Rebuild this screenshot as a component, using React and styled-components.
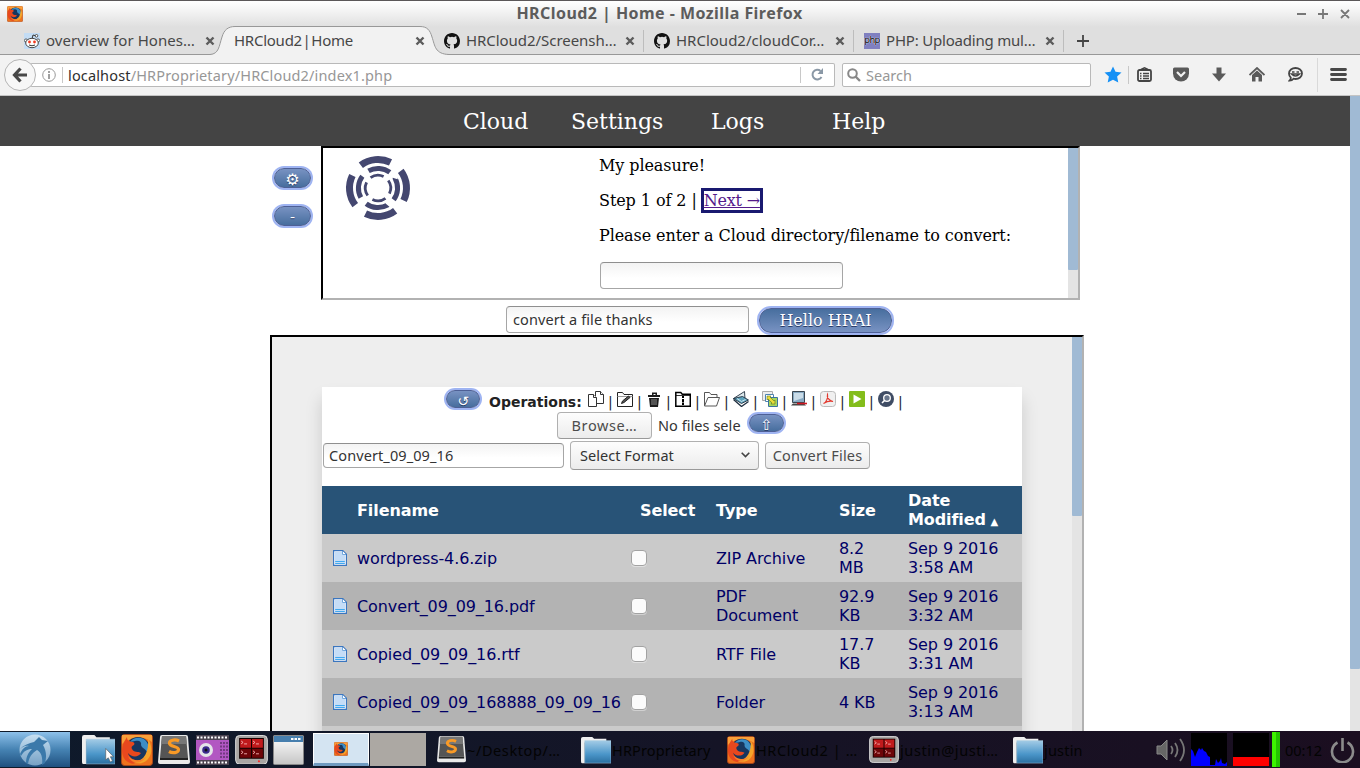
import React from 'react';
import styled, { createGlobalStyle, css } from 'styled-components';

const UI = '"Noto Sans", "Open Sans", sans-serif';
const SANS = '"DejaVu Sans", sans-serif';
const SERIF = '"DejaVu Serif", serif';

const Global = createGlobalStyle`
  * { box-sizing: border-box; }
  body { margin: 0; overflow: hidden; background: #fff; }
  svg { display: block; flex: none; }
`;

const Screen = styled.div`
  width: 1360px; height: 768px; display: flex; flex-direction: column;
  overflow: hidden; font-family: ${UI};
`;
const Label = styled.span`
  white-space: nowrap; letter-spacing: ${p => p.$ls || 0}px; word-spacing: ${p => p.$ws || 0}px;
`;

/* ---------- window chrome ---------- */
const TitleBar = styled.header`
  height: 27px; flex: none; display: flex; align-items: center; padding: 0 8px 0 7px;
  border-top: 1px solid #5b5759;
  background: linear-gradient(#fff, #f3f3f3 40%, #dfdfdf);
`;
const WindowTitle = styled.h1`
  flex: 1; margin: 0; text-align: center; color: #5c5c5c;
  font: 700 16px/22px ${UI}; letter-spacing: .45px; padding-bottom: 3px;
`;
const WindowControls = styled.div`display: flex; gap: 10px; align-items: center; width: 56px;`;

const TabStrip = styled.nav`
  height: 28px; flex: none; display: flex; background: #dfdfdf;
  border-bottom: 1px solid #989898; padding-left: 14px;
`;
const TabBox = styled.div`
  width: 210px; height: 28px; display: flex; align-items: center; position: relative;
  padding: 0 9px 0 10px; color: #474747; font-size: 15px;
  svg { position: relative; }
  &::after {
    content: ''; position: absolute; right: 0; top: 3px; width: 1px; height: 22px;
    background: ${p => (p.$line ? '#bdbdbd' : 'transparent')};
  }
`;
const TabShape = styled.span`position: absolute; left: -14px; top: -1px; z-index: 0;`;
const TabText = styled(Label)`
  position: relative; flex: 1; margin-left: ${p => (p.$bare ? 0 : 6)}px; line-height: 26px; top: -1px;
`;
const NewTab = styled.div`width: 38px; display: flex; align-items: center; justify-content: center;`;

const Toolbar = styled.div`
  height: 41px; flex: none; display: flex; align-items: center; background: #f2f2f2;
  border-bottom: 1px solid #c4c4c4; padding: 0 12px 1px 4px;
`;
const BackButton = styled.div`
  width: 32px; height: 32px; border: 1px solid #b5b5b5; border-radius: 50%; background: #f7f7f7;
  display: flex; align-items: center; justify-content: center; position: relative; z-index: 1;
`;
const Field = styled.div`
  height: 24px; border: 1px solid #b9b9b9; border-radius: 2px; background: #fff;
  display: flex; align-items: center; font-size: 14.5px; color: #979797; width: ${p => p.$w}px;
`;
const UrlField = styled(Field)`margin-left: -6px; padding-left: 12px; border-left: 0;`;
const SearchField = styled(Field)`margin-left: 7px; padding-left: 4px; gap: 5px;`;
const Rule = styled.i`width: 1px; height: ${p => p.$h || 16}px; background: ${p => p.$c || '#c8c8c8'}; margin: 0 ${p => p.$r || 0}px 0 ${p => p.$l || 0}px;`;
const Host = styled.b`font-weight: 400; color: #2e2e2e;`;
const Reload = styled.div`margin-left: auto; display: flex; align-items: center; gap: 10px; padding-right: 10px;`;
const ToolIcons = styled.div`display: flex; align-items: center; margin-left: 13px; flex: 1; justify-content: flex-start;`;
const ToolIcon = styled.div`width: 18px; display: flex; justify-content: center; margin-right: ${p => p.$r ?? 20}px;`;

/* ---------- page ---------- */
const Viewport = styled.div`height: 635px; flex: none; display: flex; overflow: hidden;`;
const Page = styled.main`width: 1350px; height: 635px; overflow: hidden; background: #fff;`;
const Track = styled.div`
  width: 10px; flex: none; background: #e4e4e4;
  &::before { content: ''; display: block; height: ${p => p.$thumb}px; background: #a0bad4; border-radius: 0 0 1px 1px; }
`;
const SiteNav = styled.nav`
  height: 50px; background: #444; display: flex; padding-left: 463px;
  font: 22px/52px ${SERIF}; color: #fff;
`;
const NavItem = styled.a`width: ${p => p.$w}px;`;

const AssistantRow = styled.section`display: flex; height: 154px; padding-left: 274px;`;
const SideButtons = styled.div`width: 47px; display: flex; flex-direction: column; gap: 18px; padding-top: 22px;`;
const Frame = styled.div`
  border: 2px solid; border-color: #000 #b2b2b2 #b2b2b2 #000; display: flex;
  width: ${p => p.$w}px; height: ${p => p.$h}px; background: ${p => p.$bg || '#fff'};
`;
const pill = css`
  border: 1px solid #4e6096; box-shadow: 0 0 0 2px #9fb4f2;
  color: #fff; text-shadow: 0 1px 0 #283966;
  display: inline-flex; align-items: center; justify-content: center;
`;
const Pill = styled.button`
  ${pill}
  width: ${p => p.$w || 37}px; height: ${p => p.$h || 20}px; padding: ${p => p.$drop || 0}px 0 0; flex: none;
  border-radius: ${p => p.$r || 10}px;
  background: ${p => (p.$hover ? 'linear-gradient(#476e9e, #7892c2)' : 'linear-gradient(#7892c2, #476e9e)')};
  font: ${p => p.$size || 14}px/16px ${p => p.$font || SANS};
`;
const LogoCell = styled.div`width: 276px; padding: 7px 0 0 22px;`;
const Chat = styled.div`
  flex: 1; color: #000; font: 16px/19px ${SERIF}; padding-top: 8px; letter-spacing: -.08px;
  p { margin: 0 0 16px; height: 19px; white-space: nowrap; }
`;
const ChatInput = styled.div`padding: 1px 0 0 1px;`;
const NextLink = styled.a`
  color: #551a8b; text-decoration: underline; border: 3px solid #191970; display: inline-block;
  height: 25px; width: 62px; margin: -3px 0 -3px -1px; line-height: 19px; vertical-align: top; letter-spacing: -.2px;
`;
const Input = styled.div`
  width: ${p => p.$w}px; height: ${p => p.$h}px; border: 1px solid #a6a6a6; border-top-color: #8f8f8f; border-radius: 4px;
  background: linear-gradient(#f3f3f3, #fff 60%); font: 14.5px/${p => p.$h - 3}px ${UI}; letter-spacing: .1px; color: #333; padding-left: ${p => p.$p || 6}px;
  flex: none;
`;
const AskRow = styled.div`display: flex; height: 35px; padding: 6px 0 0 506px; gap: 10px;`;
const PillNudge = styled.div`padding-top: 2px; line-height: 0;`;

const FilesWrap = styled.section`padding-left: 270px;`;
const FilesBody = styled.div`flex: 1; padding: 50px 0 0 50px;`;
const Card = styled.div`width: 700px; height: 420px; background: #fff; box-shadow: 0 12px 16px rgba(0,0,0,.15);`;
const OpsRow = styled.div`
  display: flex; height: 25px; padding-left: 124px; color: #222; font: 14px/30px ${SANS};
`;
const OpsTitle = styled.strong`width: 97px; margin-left: 9px;`;
const Op = styled.span`
  width: 29px; display: flex; padding: 4px 0 0 2px;
  i { font-style: normal; color: #223; line-height: 23px; margin-left: 4px; width: 5px; }
`;
const PillTop = styled.div`padding-top: ${p => p.$t}px; line-height: 0;`;
const UploadRow = styled.div`display: flex; height: 29px; padding-left: 235px;`;
const GtkButton = styled.div`
  width: ${p => p.$w}px; height: ${p => p.$h}px; margin-top: ${p => p.$t || 0}px; border: 1px solid #b0b0b0; border-bottom-color: #999; border-radius: 4px;
  background: linear-gradient(#fdfdfd, #ececec); color: ${p => p.$c || '#4c4c4c'};
  font: 14.5px/20px ${UI}; display: flex; justify-content: ${p => p.$j || 'center'}; padding: ${p => p.$pad || '0 0 2px'};
  align-items: center; flex: none;
`;
const Status = styled.div`width: 83px; margin: 0 8px 0 6px; overflow: hidden; font: 14.5px/26px ${UI}; color: #333;`;
const ConvertRow = styled.div`display: flex; height: 45px; padding-left: 1px; gap: 6px;`;

const Grid = styled.div`
  display: grid; grid-template-columns: 35px 274px 85px 123px 69px 114px; height: 48px; align-items: center;
  font: 16px/19px ${SANS}; letter-spacing: -.09px; color: #000066; background: ${p => (p.$odd ? '#b3b3b3' : '#cacaca')};
`;
const HeadGrid = styled(Grid)`background: #285377; color: #fff; font-weight: 700;`;
const Cell = styled.div`white-space: pre; padding-left: ${p => p.$p || 0}px;`;
const Check = styled.div`
  width: 16px; height: 16px; border: 1px solid #a2a2a2; border-radius: 4px; background: #fbfbfb;
  box-shadow: 0 1px 0 rgba(255,255,255,.4);
`;
const Sort = styled.span`font-size: 10px; line-height: 0; margin-left: -1px;`;

/* ---------- taskbar ---------- */
const Panel = styled.footer`
  height: 37px; flex: none; display: flex; align-items: center; color: #030303; font-size: 14.5px;
  background: linear-gradient(90deg, #0e1a2b, #141527 45%, #1b0e20);
`;
const Start = styled.div`
  width: 70px; height: 35px; background: linear-gradient(#8dc0ea, #4683b3 50%, #1f507f); display: flex; justify-content: center; align-items: center;
`;
const Launchers = styled.div`display: flex; gap: 5.7px; padding-left: 12px; width: 243px; align-items: center;`;
const Desk = styled.div`
  width: 56px; height: 33px; margin-right: 1px; display: flex; align-items: center; justify-content: center;
  background: ${p => (p.$on ? '#d4e4f2' : '#aca8a3')}; border: ${p => (p.$on ? '1px solid #fff' : '0')};
  border-bottom: ${p => (p.$on ? '3px solid #6f9ac0' : '0')};
`;
const Tasks = styled.div`display: flex; padding-left: 10px;`;
const Task = styled.div`width: ${p => p.$w}px; display: flex; align-items: center; gap: 1px;`;
const Meter = styled.div`width: 36px; height: 33px; background: #000; margin-right: ${p => p.$r}px; display: flex; align-items: flex-end;`;
const RedFill = styled.div`width: 36px; height: 9px; background: #f00;`;
const Battery = styled.div`width: 8px; height: 35px; background: linear-gradient(90deg, #3df400 50%, #24c400 50%); margin-right: 5px;`;
const Clock = styled(Label)`width: 45px;`;

/* ---------- icons ---------- */
const FirefoxIcon = ({ s = 16 }) => (
  <svg width={s} height={s} viewBox="0 0 32 32">
    <rect x=".5" y=".5" width="31" height="31" rx="3" fill="#ed721d" stroke="#a9461a" />
    <path d="M1 1h30v7C24 2 10 2 1 10z" fill="#f9a03a" />
    <circle cx="17" cy="15.5" r="12.5" fill="#17365f" />
    <path d="M9 8c3-5 12-6 16-1 3 4 4 8 2 13-2-6-6-5-7-9 1-4-3-5-6-4z" fill="#3c8dc5" />
    <path d="M6 3c0 4 2 4 5 5 2 0 3 1 2 3-2 1-3 2-2 4 2 4 6 2 9 4-3 5-10 4-13 0 2 8 13 10 20 3-3 8-14 10-20 6C0 24 0 14 3 8z" fill="#e8481e" />
    <path d="M27 5c4 6 5 14 0 20-4 5-10 5-15 4 12-2 16-12 15-24z" fill="#f5a42a" />
    <path d="M7 22c4 5 12 6 18 1-4 7-14 8-18-1z" fill="#f7832a" />
  </svg>
);
const RedditIcon = () => (
  <svg width="16" height="16" viewBox="0 0 16 16">
    <rect width="16" height="16" fill="#c3dcf4" />
    <path d="M8 6l1-4 3 .8" stroke="#333" fill="none" /><circle cx="12.5" cy="2.8" r="1.3" fill="#fff" stroke="#333" strokeWidth=".8" />
    <circle cx="2" cy="7.5" r="1.6" fill="#fff" stroke="#444" strokeWidth=".8" /><circle cx="14" cy="7.5" r="1.6" fill="#fff" stroke="#444" strokeWidth=".8" />
    <ellipse cx="8" cy="10" rx="6.3" ry="4.7" fill="#fff" stroke="#333" strokeWidth=".9" />
    <circle cx="5.5" cy="9" r="1.4" fill="#f13b22" /><circle cx="10.5" cy="9" r="1.4" fill="#f13b22" />
    <path d="M5 12q3 1.6 6 0" stroke="#333" fill="none" />
  </svg>
);
const GithubIcon = () => (
  <svg width="16" height="16" viewBox="0 0 16 16"><path fill="#111" d="M8 0C3.58 0 0 3.58 0 8c0 3.54 2.29 6.53 5.47 7.59.4.07.55-.17.55-.38v-1.49c-2.01.37-2.53-.49-2.69-.94-.09-.23-.48-.94-.82-1.13-.28-.15-.68-.52-.01-.53.63-.01 1.08.58 1.23.82.72 1.21 1.87.87 2.33.66.07-.52.28-.87.51-1.07-1.78-.2-3.64-.89-3.64-3.95 0-.87.31-1.59.82-2.15-.08-.2-.36-1.02.08-2.12 0 0 .67-.21 2.2.82a7.5 7.5 0 014 0c1.53-1.04 2.2-.82 2.2-.82.44 1.1.16 1.92.08 2.12.51.56.82 1.27.82 2.15 0 3.07-1.87 3.75-3.65 3.95.29.25.54.73.54 1.48v2.2c0 .21.15.46.55.38A8.01 8.01 0 0016 8c0-4.42-3.58-8-8-8z" /></svg>
);
const PhpBadge = styled.span`
  width: 16px; height: 16px; background: #8080c0; color: #000; font: 9px/14px ${SANS}; text-align: center; letter-spacing: -.6px;
  text-shadow: 0 0 1px #fff, 0 0 1px #fff; position: relative; overflow: hidden;
`;
const CloseIcon = () => (
  <svg width="10" height="10" viewBox="0 0 10 10"><path d="M1.500 1.500l7 7m0-7l-7 7" stroke="#5c5c5c" strokeWidth="2.400" /></svg>
);
const ActiveTabShape = () => (
  <svg width="239" height="30" viewBox="0 0 239 30">
    <path d="M0 28.5C9 28 9 20 12 11 14 4 18 .5 25 .5H210C217 .5 220 4 222 11 225 20 225 28 239 28.500V30H0z" fill="#f2f2f2" />
    <path d="M0 28.5C9 28 9 20 12 11 14 4 18 .5 25 .5H210C217 .5 220 4 222 11 225 20 225 28 239 28.500" fill="none" stroke="#989898" />
  </svg>
);
const Logo = () => (
  <svg width="66" height="66" viewBox="-33 -33 66 66" fill="none" stroke="#444770">
    <circle r="28.5" strokeWidth="7" pathLength="360" strokeDasharray="63 27" transform="rotate(-127)" />
    <circle r="19.6" strokeWidth="5" pathLength="360" strokeDasharray="66 24" transform="rotate(-119)" />
    <circle r="12.7" strokeWidth="2.8" pathLength="360" strokeDasharray="62 28" transform="rotate(-126)" />
  </svg>
);
const FileIcon = () => (
  <svg width="14" height="16" viewBox="0 0 14 16">
    <path d="M.6.6h9.2l3.600 3.600v11.200H.6z" fill="#fff" stroke="#3b76bf" strokeWidth="1.2" />
    <path d="M2 2h7v3h3v9H2z" fill="#c5ddf7" /><path d="M9.500 1v3.500H13" fill="#fff" stroke="#4e92d5" strokeWidth=".8" />
    <path d="M2.200 11.500h9.600M2.200 13.500h9.600" stroke="#3fa9f0" />
  </svg>
);
const opIcons = [
  <g fill="#fff" stroke="#333" strokeWidth="1"><path d="M7.500.5h5l3 3v9h-8z" /><path d="M12.500.5v3h3" /><path d="M.5 3.500h5l3 3v9h-8z" /><path d="M5.500 3.500v3h3" /></g>,
  <g fill="none" stroke="#222"><path d="M.5 15.500v-14h5l1.500 2h8.500v12z" /><path d="M.5 5.500h15" stroke="#999" /><path d="M4.500 12.500l1-2.500 6-5 1.500 1.500-6 5z" fill="#555" /></g>,
  <g fill="#1c1c1c"><path d="M2 4h12v2H2zM6 1.500h5V4H9.500V3h-2v1H6zM3 7h10l-1 9H4z" /><path d="M6 8v6M8 8v6M10 8v6" stroke="#aaa" strokeWidth=".8" /></g>,
  <g><path d="M.8 15.200V1.500h5l1.500 1.700h8v12z" fill="#fff" stroke="#000" strokeWidth="1.500" /><path d="M8 5v2M8 8v3M8 11.500v2.500" stroke="#000" strokeWidth="2" /><path d="M1 4.500h14" stroke="#000" strokeWidth=".8" /></g>,
  <g fill="#fff" stroke="#444" strokeWidth=".9"><path d="M.5 14.500v-13h5l1.500 2h6v3" /><path d="M.5 15l3.500-8.500h11.500L12.500 15z" /></g>,
  <g stroke="#203040" strokeWidth=".9"><path d="M.5 7.500L11.500.5 12 8z" fill="#dce8ec" /><path d="M.5 7.500l8 5 7-3.500-6-3.500z" fill="#5ea3bd" /><path d="M.5 8.500l8 7 7-5" fill="none" strokeWidth="1.300" /><path d="M4 7.500l4.500 3 4-2" stroke="#d8eef4" fill="none" /></g>,
  <g><path d="M.5.5h10v9H.5z" fill="#eee" stroke="#aaa" /><path d="M3.500 3.500h8v7h-8z" fill="#fff" stroke="#4d84b0" /><path d="M6.500 6.500h9v9h-9z" fill="#a9d55c" stroke="#3b74a0" /><path d="M5 5h4l-1 1 4 4 1-1v4H9l1-1-4-4-1 1z" fill="#eadb38" stroke="#5b7b21" strokeWidth=".6" /></g>,
  <g><path d="M1.500.5h12v11h-12z" fill="#87a9c2" stroke="#3b4650" /><path d="M3 2h9v5L3 10z" fill="#cadce8" /><path d="M0 14.500l2-2h11l2 2z" fill="#444" /><path d="M6 12.500h10" stroke="#d01822" strokeWidth="1.600" /></g>,
  <g><rect x=".5" y=".5" width="15" height="15" rx="3" fill="#f0f0f0" stroke="#bbb" /><path d="M3.500 12.500C7 11 8 6 7.500 3.500c-1 3 2 6.500 5.500 7-3-1-7 .5-9.500 2z" fill="none" stroke="#e33a30" strokeWidth="1.200" /></g>,
  <g><rect width="16" height="16" rx="1" fill="#83bd1b" /><path d="M4.500 3.500l8 4.500-8 4.500z" fill="#fff" /></g>,
  <g><circle cx="8" cy="8" r="8" fill="#3f4c64" /><circle cx="9" cy="7" r="3.300" fill="#68758b" stroke="#fff" strokeWidth="1.300" /><path d="M6.500 9.500L4 12" stroke="#fff" strokeWidth="1.600" /></g>,
];
const FolderIcon = ({ s = 30, pointer }) => (
  <svg width={s} height={s} viewBox="0 0 32 32">
    <defs><linearGradient id="fold" x2="0" y2="1"><stop stopColor="#a3cbe6" /><stop offset=".6" stopColor="#4b96c9" /><stop offset="1" stopColor="#2b6fa0" /></linearGradient></defs>
    <path d="M0 4q0-2 2-2h10l2 2h13v4H4v22H1q-1 0-1-2z" fill="#eee" />
    <path d="M4 6h28v24H4z" fill="url(#fold)" stroke="#a7cbe2" strokeWidth=".5" />
    {pointer && <path d="M23 15v11l2.500-2 2 4 2-1-2-4h3z" fill="#fff" stroke="#555" strokeWidth=".6" />}
  </svg>
);
const SublimeIcon = ({ s = 32 }) => (
  <svg width={s} height={s} viewBox="0 0 32 32">
    <path d="M4 1h24q2 0 2 2l2 25q0 2-2 2H2q-2 0-2-2L2 3q0-2 2-2z" fill="#e9e9e9" />
    <path d="M4 2h24l2 22H2z" fill="#555" /><path d="M4 2h24l1 8H3z" fill="#777" /><path d="M2 24h28v2H2z" fill="#222" />
    <path d="M21 7C17 5 11 6 11.500 9.500s9 2.500 9 6-6 4-9.500 2" fill="none" stroke="#f99a26" strokeWidth="3.200" />
  </svg>
);
const RecorderIcon = () => (
  <svg width="33" height="30" viewBox="0 0 33 30">
    <rect width="33" height="30" rx="1" fill="#b257c2" /><path d="M0 0h33v5H0zM0 25h33v5H0z" fill="#4b4350" />
    <path d="M1 2.500h31M1 27.500h31" stroke="#fff" strokeWidth="2" strokeDasharray="2 1.500" />
    <path d="M25 7v16M28 7v16M31 7v16" stroke="#61306e" strokeWidth="1.500" strokeDasharray="2 1.500" />
    <circle cx="10" cy="15" r="7" fill="#e4e4e8" /><circle cx="10" cy="15" r="3.800" fill="#3a2a8c" /><circle cx="10" cy="15" r="1.500" fill="#111" />
  </svg>
);
const TermIcon = ({ s = 33 }) => (
  <svg width={s} height={s * 0.9} viewBox="0 0 33 30">
    <rect x=".5" y=".5" width="32" height="29" rx="4" fill="#a9a6a4" stroke="#ddd" /><rect x="4" y="3" width="25" height="21" fill="#150000" />
    <path d="M5 4h11v9H5zM17 4h11v9H17z" fill="#c01a1c" /><path d="M5 14h11v9H5zM17 14h11v9H17z" fill="#6d0508" />
    <path d="M6 6l2 1.500L6 9M9 9h3M18 6l2 1.500-2 1.500M21 9h3M6 16l2 1.500L6 19M9 19h3M18 16l2 1.500-2 1.500M21 19h3" fill="none" stroke="#f8b9b9" strokeWidth=".9" />
    <circle cx="24" cy="26.500" r="1" fill="#f22" />
  </svg>
);
const WindowIcon = () => (
  <svg width="31" height="30" viewBox="0 0 31 30">
    <defs><linearGradient id="win" x2="0" y2="1"><stop stopColor="#fff" /><stop offset="1" stopColor="#c5c5c5" /></linearGradient></defs>
    <rect x=".5" y=".5" width="30" height="29" rx="1" fill="url(#win)" stroke="#888" /><path d="M1 1h29v6H1z" fill="#477fae" />
    <path d="M18 4h10" stroke="#fff" strokeWidth="2" strokeDasharray="2.500 1" />
  </svg>
);
const BirdIcon = () => (
  <svg width="32" height="32" viewBox="0 0 32 32">
    <defs><linearGradient id="orb" x2="0" y2="1"><stop stopColor="#d3e6f4" /><stop offset="1" stopColor="#86afd0" /></linearGradient></defs>
    <circle cx="16" cy="16" r="15.500" fill="url(#orb)" opacity=".85" />
    <path d="M1 15C5 11 10 9 15 8l5-5 3 3 6 1-5 4c3 5 4 11 2 18l-3 2c1-8-1-13-5-15-5 3-8 7-9 14l-2-1c0-6 2-10 6-14-5 0-8 2-11 7l-1-2c2-5 5-8 9-8-4-1-6 1-9 3z" fill="#3b79aa" />
  </svg>
);
const VolumeIcon = () => (
  <svg width="30" height="28" viewBox="0 0 30 28" fill="none" stroke="#777" strokeWidth="1.800">
    <path d="M1 10h4l6-6v20l-6-6H1z" fill="#666" stroke="#888" strokeWidth="1" /><path d="M15 10q3 4 0 8M19 7q5 7 0 14M24 3q8 11 0 22" />
  </svg>
);
const PowerIcon = () => (
  <svg width="25" height="26" viewBox="0 0 25 26" fill="none" stroke="#8b8b8b" strokeWidth="2.600">
    <path d="M7.500 5.500a10.500 10.500 0 1 0 10 0M12.500 1v13" />
  </svg>
);
const cpu = '0,33 0,16 2,18 4,24 6,19 8,15 10,17 11,15 13,18 15,19 17,23 19,24 19,32 24,32 25,26 27,30 29,28 30,25 31,30 34,31 36,29 36,33';

const tabs = [
  { icon: <RedditIcon />, text: 'overview for Hones…', ls: 0.07 },
  { text: 'HRCloud2 | Home', active: true, ls: -0.25, ws: -3 },
  { icon: <GithubIcon />, text: 'HRCloud2/Screensh…', line: true, ls: -0.05 },
  { icon: <GithubIcon />, text: 'HRCloud2/cloudCor…', line: true, ls: 0 },
  { icon: <PhpBadge>php</PhpBadge>, text: 'PHP: Uploading mul…', line: true, ls: -0.2 },
];
const files = [
  ['wordpress-4.6.zip', 'ZIP Archive', '8.2\nMB', 'Sep 9 2016\n3:58 AM'],
  ['Convert_09_09_16.pdf', 'PDF\nDocument', '92.9\nKB', 'Sep 9 2016\n3:32 AM'],
  ['Copied_09_09_16.rtf', 'RTF File', '17.7\nKB', 'Sep 9 2016\n3:31 AM'],
  ['Copied_09_09_168888_09_09_16', 'Folder', '4 KB', 'Sep 9 2016\n3:13 AM'],
  ['', '', '', ''],
];

function Chrome() {
  return (
    <>
      <TitleBar>
        <FirefoxIcon />
        <WindowTitle>HRCloud2 | Home - Mozilla Firefox</WindowTitle>
        <WindowControls>
          <svg width="56" height="12" viewBox="0 0 56 12" stroke="#777" strokeWidth="1.800"><path d="M1 6h9M22 6h10M27 1v10M45 2l8 8m0-8l-8 8" /></svg>
        </WindowControls>
      </TitleBar>
      <TabStrip>
        {tabs.map(t => (
          <TabBox key={t.text} $line={t.line}>
            {t.active && <TabShape><ActiveTabShape /></TabShape>}
            {t.icon}
            <TabText $bare={!t.icon} $ls={t.ls} $ws={t.ws}>{t.text}</TabText>
            <CloseIcon />
          </TabBox>
        ))}
        <NewTab><svg width="12" height="12" viewBox="0 0 12 12"><path d="M6 0v12M0 6h12" stroke="#444" strokeWidth="1.800" /></svg></NewTab>
      </TabStrip>
      <Toolbar>
        <BackButton><svg width="16" height="16" viewBox="0 0 16 16"><path d="M8.500 1.500L2.500 8l6 6.500M3 8h12" fill="none" stroke="#484848" strokeWidth="3.200" /></svg></BackButton>
        <UrlField $w={805}>
          <svg width="14" height="14" viewBox="0 0 14 14"><circle cx="7" cy="7" r="6.300" fill="none" stroke="#999" /><path d="M7 3v2M7 6v5" stroke="#888" strokeWidth="1.600" /></svg>
          <Rule $l={6} $r={5} />
          <Label $ls={0.15}><Host>localhost</Host>/HRProprietary/HRCloud2/index1.php</Label>
          <Reload><Rule /><svg width="13" height="13" viewBox="0 0 13 13"><path d="M10.500 9A4.800 4.800 0 1 1 9.500 3" fill="none" stroke="#8a98a6" strokeWidth="2" /><path d="M12 0v6H6.500z" fill="#8a98a6" /></svg></Reload>
        </UrlField>
        <SearchField $w={249}>
          <svg width="14" height="14" viewBox="0 0 14 14"><circle cx="5.500" cy="5.500" r="4.300" fill="none" stroke="#888" strokeWidth="2" /><path d="M8.500 8.500L13 13" stroke="#888" strokeWidth="2.400" /></svg>
          <Label>Search</Label>
        </SearchField>
        <ToolIcons>
          <ToolIcon $r={6}><svg width="18" height="17" viewBox="0 0 18 17"><path d="M9 .5l2.500 5.300 6 .8-4.400 4 1.200 6L9 13.700l-5.300 2.900 1.200-6L.5 6.600l6-.8z" fill="#1590f5" /></svg></ToolIcon>
          <Rule $r={6} $h={18} />
          <ToolIcon $r={19}><svg width="15" height="15" viewBox="0 0 15 15" fill="none" stroke="#444" strokeWidth="1.800"><rect x="1" y="3" width="13" height="11" rx="1.500" /><path d="M4 2.500L7.500.8l3.500 1.700M3 6.500h1.500M6 6.500h6M3 9h1.500M6 9h6M3 11.500h1.500M6 11.500h6" strokeWidth="1.400" /></svg></ToolIcon>
          <ToolIcon><svg width="16" height="15" viewBox="0 0 16 15"><path d="M1.500.5h13q1.500 0 1.500 1.500v4.500a8 8 0 0 1-16 0V2Q0 .5 1.500.5z" fill="#5a5a5a" /><path d="M4 5l4 4 4-4" fill="none" stroke="#f2f2f2" strokeWidth="2.200" /></svg></ToolIcon>
          <ToolIcon><svg width="14" height="15" viewBox="0 0 14 15"><path d="M4.500.5h5v6H14l-7 8-7-8h4.500z" fill="#5a5a5a" /></svg></ToolIcon>
          <ToolIcon><svg width="16" height="15" viewBox="0 0 16 15"><path d="M.5 8L8 1l7.500 7" fill="none" stroke="#5a5a5a" strokeWidth="1.800" /><path d="M3 8l5-4.500L13 8v6.500H9.500V10h-3v4.500H3z" fill="#5a5a5a" /></svg></ToolIcon>
          <ToolIcon $r={13}><svg width="15" height="15" viewBox="0 0 15 15"><path d="M7.500 1C11 1 14 3.300 14 6.500S11 12 7.500 12q-1 0-2-.3-1.500 2-4 2 1.500-1.500 1.300-3Q1 9 1 6.500C1 3.300 4 1 7.500 1z" fill="none" stroke="#444" strokeWidth="1.800" /><path d="M4 5h2.500M8.500 5H11M3.500 7q4 4 8 0z" fill="none" stroke="#444" strokeWidth="1.500" /></svg></ToolIcon>
          <Rule $h={34} $c="#d9d9d9" $r={12} />
          <svg width="17" height="13" viewBox="0 0 17 13"><path d="M1.500 1.500h14M1.500 6.500h14M1.500 11.500h14" stroke="#484848" strokeWidth="2.800" strokeLinecap="round" /></svg>
        </ToolIcons>
      </Toolbar>
    </>
  );
}

function FileManager() {
  return (
    <Card>
      <OpsRow>
        <PillTop $t={3}><Pill $w={34} $h={18} $drop={3}>↺</Pill></PillTop>
        <OpsTitle>Operations:</OpsTitle>
        {opIcons.map((icon, i) => <Op key={i}><svg width="16" height="16" viewBox="0 0 16 16">{icon}</svg><i>|</i></Op>)}
      </OpsRow>
      <UploadRow>
        <GtkButton $w={95} $h={27}><Label $ls={0.6}>Browse…</Label></GtkButton>
        <Status><Label $ls={0.05}>No files sele</Label></Status>
        <PillTop $t={2}><Pill $w={35} $h={18} $drop={4} $size={15}>⇧</Pill></PillTop>
      </UploadRow>
      <ConvertRow>
        <div><PillTop $t={2}><Input $w={241} $h={25} $p={5}>Convert_09_09_16</Input></PillTop></div>
        <GtkButton $w={189} $h={29} $c="#333" $j="space-between" $pad="0 8px 2px 9px">
          <Label $ls={0.05}>Select Format</Label>
          <svg width="9" height="6" viewBox="0 0 9 6"><path d="M.7.7l3.800 3.800L8.300.7" fill="none" stroke="#444" strokeWidth="1.600" /></svg>
        </GtkButton>
        <GtkButton $w={105} $h={27} $t={1}><Label $ls={0.15}>Convert Files</Label></GtkButton>
      </ConvertRow>
      <HeadGrid>
        <Cell /><Cell>Filename</Cell><Cell $p={9}>Select</Cell><Cell>Type</Cell><Cell>Size</Cell>
        <Cell>Date{'\n'}Modified <Sort>▲</Sort></Cell>
      </HeadGrid>
      {files.map((f, i) => (
        <Grid key={i} $odd={i % 2 === 1}>
          <Cell $p={11}>{f[0] && <FileIcon />}</Cell>
          <Cell>{f[0]}</Cell><Cell>{f[0] && <Check />}</Cell>
          <Cell>{f[1]}</Cell><Cell>{f[2]}</Cell><Cell>{f[3]}</Cell>
        </Grid>
      ))}
    </Card>
  );
}

function Taskbar() {
  return (
    <Panel>
      <Start><BirdIcon /></Start>
      <Launchers>
        <FolderIcon s={33} pointer /><FirefoxIcon s={32} /><SublimeIcon /><RecorderIcon /><TermIcon /><WindowIcon />
      </Launchers>
      <Desk $on><FirefoxIcon s={14} /></Desk><Desk />
      <Tasks>
        <Task $w={144}><SublimeIcon s={29} /><Label $ls={0.6}>~/Desktop/…</Label></Task>
        <Task $w={146}><FolderIcon s={30} /><Label $ls={0.15}>HRProprietary</Label></Task>
        <Task $w={142}><FirefoxIcon s={28} /><Label $ls={0.6}>HRCloud2 | …</Label></Task>
        <Task $w={144}><TermIcon s={30} /><Label $ls={0.6}>justin@justi…</Label></Task>
        <Task $w={143}><FolderIcon s={30} /><Label $ls={0.2}>justin</Label></Task>
      </Tasks>
      <Task $w={35}><VolumeIcon /></Task>
      <Meter $r={6}><svg width="36" height="33" viewBox="0 0 36 33"><polygon points={cpu} fill="#00f" /></svg></Meter>
      <Meter $r={3}><RedFill /></Meter>
      <Battery />
      <Clock>00:12</Clock>
      <PowerIcon />
    </Panel>
  );
}

export default function App() {
  return (
    <Screen>
      <Global />
      <Chrome />
      <Viewport>
        <Page>
          <SiteNav>
            <NavItem $w={108}>Cloud</NavItem><NavItem $w={140}>Settings</NavItem><NavItem $w={121}>Logs</NavItem><NavItem>Help</NavItem>
          </SiteNav>
          <AssistantRow>
            <SideButtons><Pill $size={16} $drop={3}>⚙</Pill><Pill $drop={2}>-</Pill></SideButtons>
            <Frame $w={759} $h={154}>
              <LogoCell><Logo /></LogoCell>
              <Chat>
                <p>My pleasure!</p>
                <p>Step 1 of 2 | <NextLink>Next →</NextLink></p>
                <p>Please enter a Cloud directory/filename to convert:</p>
                <ChatInput><Input $w={243} $h={27} /></ChatInput>
              </Chat>
              <Track $thumb={122} />
            </Frame>
          </AssistantRow>
          <AskRow>
            <Input $w={243} $h={27}>convert a file thanks</Input>
            <PillNudge><Pill $w={133} $h={25} $r={12} $size={16} $font={SERIF} $hover>Hello HRAI</Pill></PillNudge>
          </AskRow>
          <FilesWrap>
            <Frame $w={814} $h={500} $bg="#eee">
              <FilesBody><FileManager /></FilesBody>
              <Track $thumb={179} />
            </Frame>
          </FilesWrap>
        </Page>
        <Track $thumb={573} />
      </Viewport>
      <Taskbar />
    </Screen>
  );
}
